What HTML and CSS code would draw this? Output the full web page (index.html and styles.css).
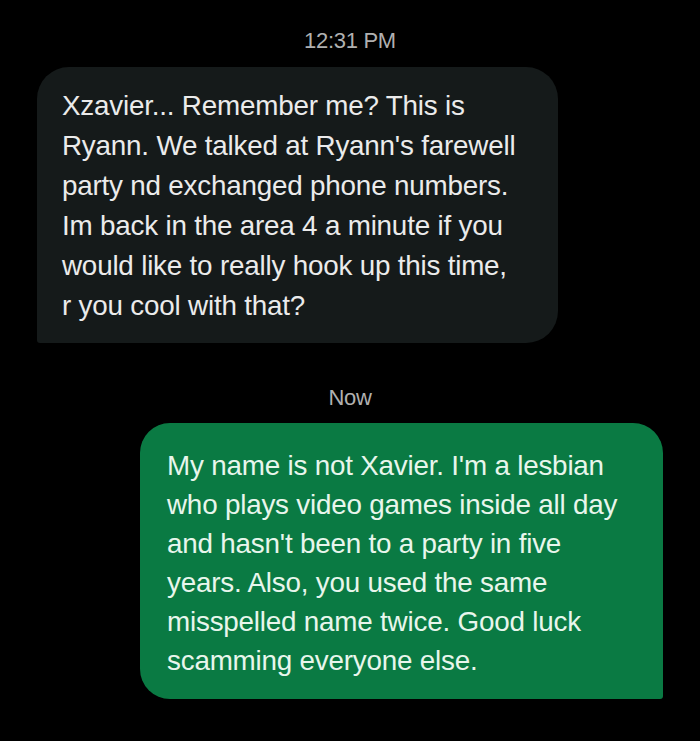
FILE: index.html
```html
<!DOCTYPE html>
<html>
<head>
<meta charset="utf-8">
<link rel="stylesheet" href="styles.css">
</head>
<body>
<div class="chat">
  <div class="stamp stamp-first">12:31 PM</div>
  <div class="bubble incoming">Xzavier... Remember me? This is<br>Ryann. We talked at Ryann's farewell<br>party nd exchanged phone numbers.<br>Im back in the area 4 a minute if you<br>would like to really hook up this time,<br>r you cool with that?</div>
  <div class="stamp stamp-now">Now</div>
  <div class="bubble outgoing">My name is not Xavier. I'm a lesbian<br>who plays video games inside all day<br>and hasn't been to a party in five<br>years. Also, you used the same<br>misspelled name twice. Good luck<br>scamming everyone else.</div>
</div>
</body>
</html>
```
FILE: styles.css
```css
html, body {
  margin: 0;
  padding: 0;
  background: #000;
}
.chat {
  width: 700px;
  height: 741px;
  display: flex;
  flex-direction: column;
  font-family: "Liberation Sans", Arial, sans-serif;
}
.stamp {
  text-align: center;
  color: #b0b0b0;
  font-size: 22px;
  line-height: 24px;
  letter-spacing: -0.3px;
}
.stamp-first {
  margin-top: 29px;
  margin-bottom: 14px;
}
.stamp-now {
  margin-top: 43px;
  margin-bottom: 13px;
}
.bubble {
  font-size: 27.8px;
  line-height: 40px;
  letter-spacing: -0.2px;
  box-sizing: border-box;
}
.incoming {
  margin-left: 37px;
  width: 521px;
  height: 276px;
  padding: 19px 10px 0 25px;
  background: #151a1a;
  color: #ebebeb;
  border-radius: 32px 32px 32px 3px;
}
.outgoing {
  margin-left: 140px;
  width: 523px;
  height: 276px;
  padding: 23px 10px 0 27px;
  line-height: 39px;
  background: #0a7a43;
  color: #e8f6ec;
  border-radius: 30px 30px 3px 30px;
}
```
